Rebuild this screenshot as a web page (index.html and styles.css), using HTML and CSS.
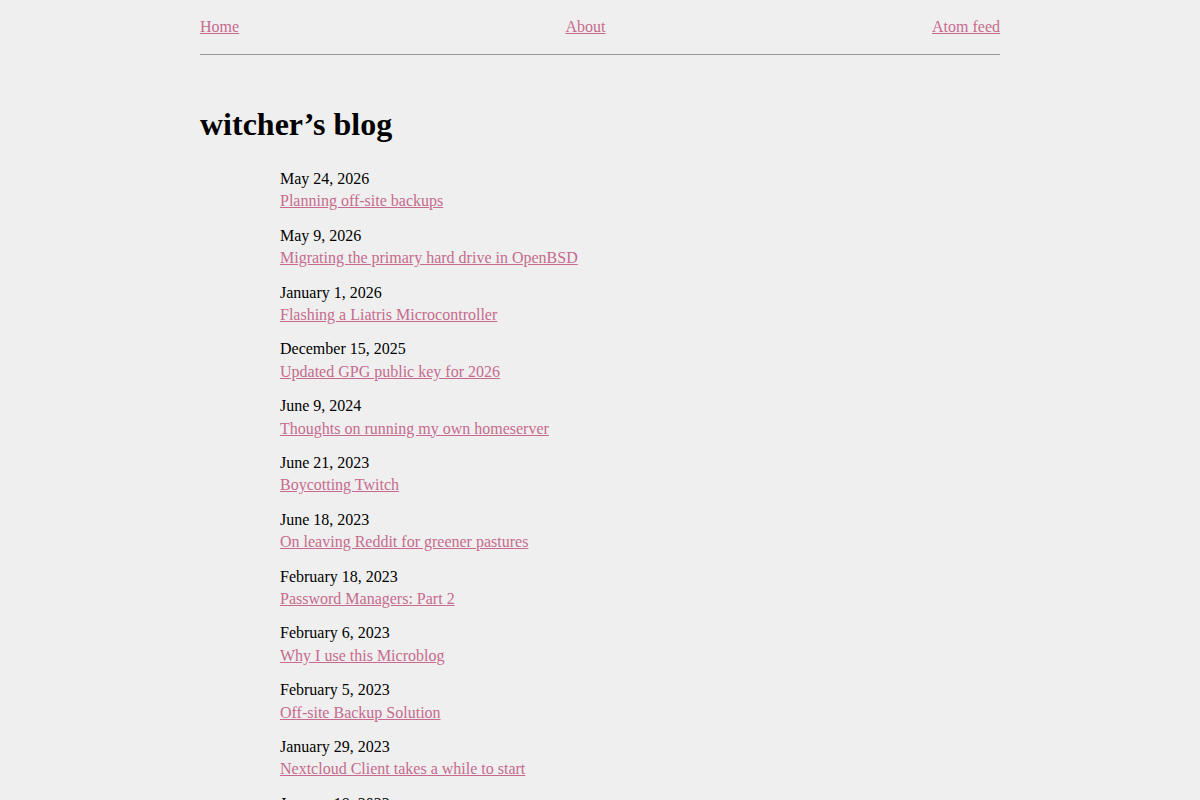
FILE: index.html
```html
<!DOCTYPE html>
<html lang="en">
<head>
<meta charset="utf-8">
<title>witcher’s blog</title>
<link rel="stylesheet" href="styles.css">
</head>
<body>
<div class="page">
  <nav class="nav">
    <a href="#">Home</a>
    <a href="#">About</a>
    <a href="#">Atom feed</a>
  </nav>
  <hr class="rule">
  <h1 class="title">witcher’s blog</h1>
  <ul class="posts">
    <li class="post"><div class="date">May 24, 2026</div><a href="#">Planning off-site backups</a></li>
    <li class="post"><div class="date">May 9, 2026</div><a href="#">Migrating the primary hard drive in OpenBSD</a></li>
    <li class="post"><div class="date">January 1, 2026</div><a href="#">Flashing a Liatris Microcontroller</a></li>
    <li class="post"><div class="date">December 15, 2025</div><a href="#">Updated GPG public key for 2026</a></li>
    <li class="post"><div class="date">June 9, 2024</div><a href="#">Thoughts on running my own homeserver</a></li>
    <li class="post"><div class="date">June 21, 2023</div><a href="#">Boycotting Twitch</a></li>
    <li class="post"><div class="date">June 18, 2023</div><a href="#">On leaving Reddit for greener pastures</a></li>
    <li class="post"><div class="date">February 18, 2023</div><a href="#">Password Managers: Part 2</a></li>
    <li class="post"><div class="date">February 6, 2023</div><a href="#">Why I use this Microblog</a></li>
    <li class="post"><div class="date">February 5, 2023</div><a href="#">Off-site Backup Solution</a></li>
    <li class="post"><div class="date">January 29, 2023</div><a href="#">Nextcloud Client takes a while to start</a></li>
    <li class="post"><div class="date">January 18, 2023</div><a href="#">Password Managers: Part 1</a></li>
  </ul>
</div>
</body>
</html>
```

FILE: styles.css
```css
html, body {
  margin: 0;
  padding: 0;
  background: #efefef;
  color: #000;
  font-family: "Liberation Serif", "Times New Roman", serif;
  font-size: 16px;
}
a {
  color: #c66b8d;
}
.page {
  width: 800px;
  margin: 0 auto;
}
.nav {
  display: flex;
  justify-content: space-between;
  padding-top: 18px;
  line-height: 18px;
}
.rule {
  margin: 18px 0 0;
  border: 0;
  border-top: 1px solid #999;
  height: 0;
}
.title {
  margin: 51px 0 0;
  font-size: 32px;
  line-height: 37px;
  font-weight: bold;
}
.posts {
  list-style: none;
  margin: 25px 0 0;
  padding: 0 0 0 80px;
}
.post {
  line-height: 22px;
  margin-bottom: 12.4px;
}
.date {
  display: block;
  line-height: 22.4px;
}
```
